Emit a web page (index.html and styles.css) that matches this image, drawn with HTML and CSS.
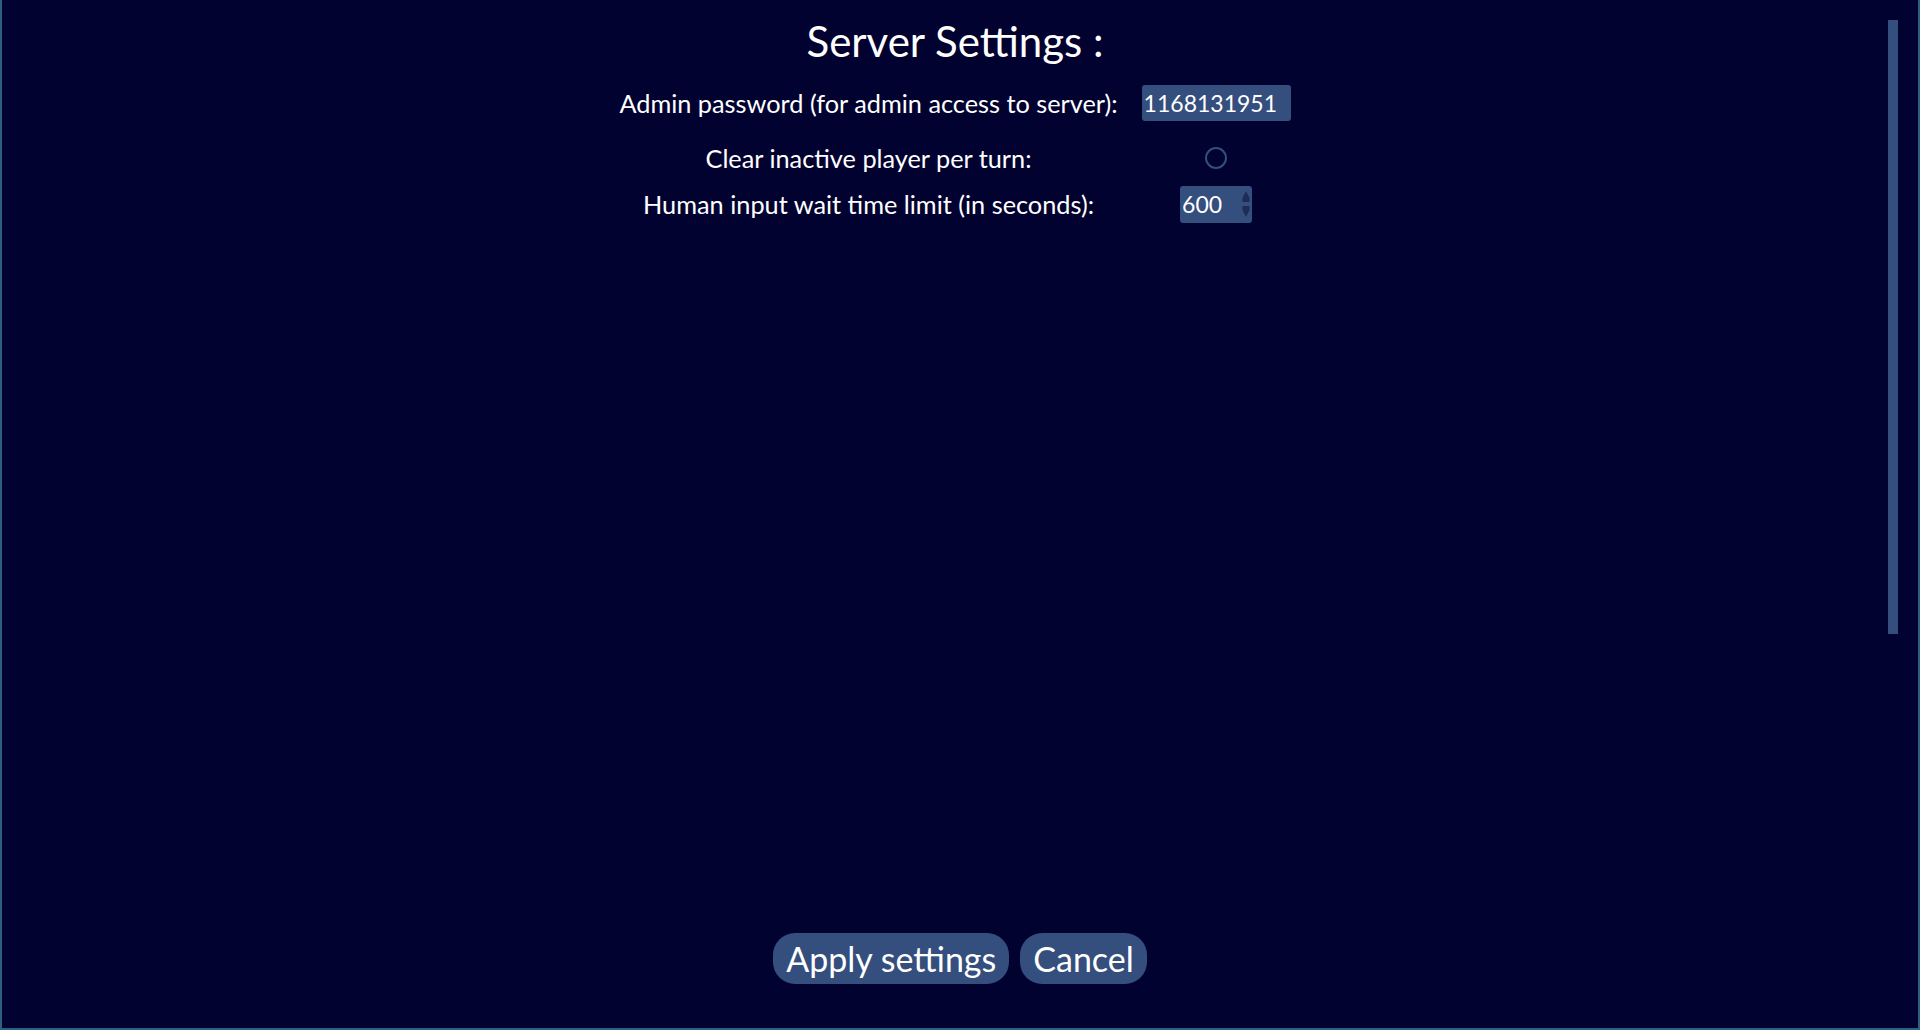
FILE: index.html
```html
<!DOCTYPE html>
<html lang="en">
<head>
<meta charset="utf-8">
<title>Server Settings</title>
<link rel="stylesheet" href="styles.css">
</head>
<body>
<div class="frame">
  <main class="panel">
    <h1 class="title">Server Settings :</h1>
    <div class="settings">
      <div class="label">Admin password (for admin access to server):</div>
      <div class="control"><span class="field field-text">1168131951</span></div>

      <div class="label">Clear inactive player per turn:</div>
      <div class="control"><span class="radio"></span></div>

      <div class="label">Human input wait time limit (in seconds):</div>
      <div class="control">
        <span class="field field-number">600
          <svg class="spin" width="8" height="30" viewBox="0 0 8 30" aria-hidden="true">
            <path d="M4 2 L7.5 9 L7.5 13 L0.5 13 L0.5 9 Z" fill="#1d2c55"/>
            <path d="M4 28 L7.5 21 L7.5 17 L0.5 17 L0.5 21 Z" fill="#1d2c55"/>
          </svg>
        </span>
      </div>
    </div>
  </main>
  <footer class="actions">
    <button class="btn">Apply settings</button>
    <button class="btn">Cancel</button>
  </footer>
  <div class="scrollbar"></div>
</div>
</body>
</html>
```

FILE: styles.css
```css
html, body {
  margin: 0;
  padding: 0;
  height: 100%;
  background: #020230;
}

body {
  font-family: Lato, "Open Sans", sans-serif;
  color: #ffffff;
}

.frame {
  position: relative;
  box-sizing: border-box;
  height: 1030px;
  border-left: 2px solid #2d5f80;
  border-right: 2px solid #2d5f80;
  border-bottom: 2px solid #2d5f80;
  display: flex;
  flex-direction: column;
  overflow: hidden;
}

.panel {
  flex: 1;
  padding-right: 10px;
  display: flex;
  flex-direction: column;
  align-items: center;
}

.title {
  margin: 16px 0 0 0;
  font-size: 42px;
  line-height: 50px;
  font-weight: 400;
  letter-spacing: 0;
}

.settings {
  margin-top: 9px;
  display: grid;
  grid-template-columns: auto auto;
  grid-template-rows: 56px 54px 38px;
  align-items: center;
  justify-items: center;
}

.label {
  padding: 0 12px;
  font-size: 25.3px;
  line-height: 30px;
  text-align: center;
}

.control {
  padding: 0 12px;
  display: flex;
  align-items: center;
  justify-content: center;
}

.field {
  box-sizing: border-box;
  display: flex;
  align-items: center;
  background: #344e7e;
  border-radius: 3px;
  font-size: 23px;
  color: #ffffff;
  padding-left: 2px;
}

.field-text {
  width: 149px;
  height: 36px;
}

.field-number {
  width: 72px;
  height: 37px;
  justify-content: space-between;
  padding-right: 2px;
}

.spin {
  display: block;
}

.radio {
  box-sizing: border-box;
  width: 22px;
  height: 22px;
  border: 2.5px solid #344e7e;
  border-radius: 50%;
}

.actions {
  display: flex;
  justify-content: center;
  gap: 11px;
  padding-bottom: 44px;
}

.btn {
  height: 51px;
  padding: 0 13px 2px 13px;
  border: none;
  border-radius: 22px;
  background: #344e7e;
  color: #ffffff;
  font-family: Lato, "Open Sans", sans-serif;
  font-size: 34px;
  line-height: 51px;
}

.scrollbar {
  position: absolute;
  top: 20px;
  right: 20px;
  width: 10px;
  height: 614px;
  background: #344e7e;
}
```
